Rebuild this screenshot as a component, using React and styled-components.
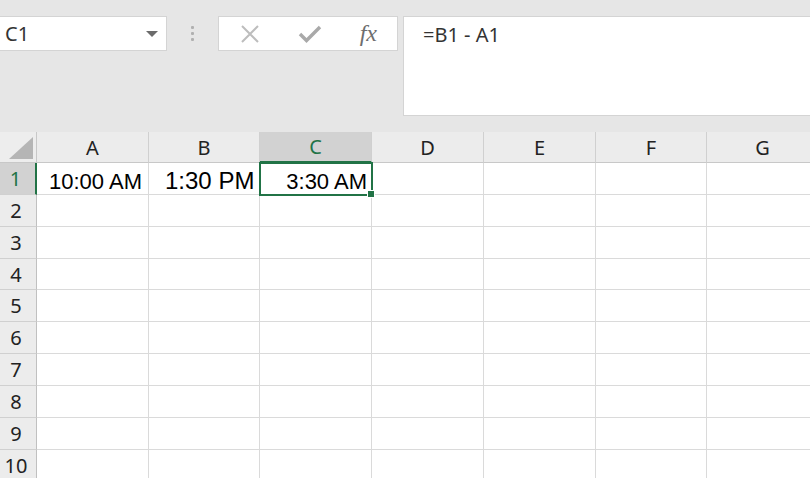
import styled, { createGlobalStyle } from "styled-components";

const GlobalStyle = createGlobalStyle`
  html, body {
    margin: 0;
    padding: 0;
    background: #ffffff;
    overflow: hidden;
  }
  * {
    box-sizing: border-box;
  }
`;

const Page = styled.div`
  width: 810px;
  height: 478px;
  display: flex;
  flex-direction: column;
  overflow: hidden;
  font-family: "Noto Sans", "Open Sans", sans-serif;
`;

const TopBar = styled.div`
  height: 132px;
  background: #e6e6e6;
  display: flex;
  align-items: flex-start;
  padding-top: 16px;
  flex-shrink: 0;
`;

const NameBox = styled.div`
  width: 167px;
  height: 35px;
  background: #ffffff;
  border: 1px solid #d4d4d4;
  border-left: none;
  display: flex;
  align-items: center;
  justify-content: space-between;
  padding: 0 8px 0 5px;
  font-size: 20px;
  color: #333333;
`;

const Caret = styled.span`
  width: 0;
  height: 0;
  border-left: 6px solid transparent;
  border-right: 6px solid transparent;
  border-top: 6px solid #6b6b6b;
`;

const Grip = styled.div`
  width: 51px;
  height: 35px;
  display: flex;
  flex-direction: column;
  align-items: center;
  justify-content: center;
  gap: 3px;
`;

const GripDot = styled.span`
  width: 3px;
  height: 3px;
  background: #b0b0b0;
  border-radius: 1px;
`;

const FnBox = styled.div`
  width: 180px;
  height: 35px;
  background: #ffffff;
  border: 1px solid #d4d4d4;
  display: flex;
  align-items: center;
  justify-content: space-between;
  padding: 0 20px 0 20px;
`;

const FxLabel = styled.span`
  font-family: "Liberation Serif", "DejaVu Serif", serif;
  font-style: italic;
  font-size: 24px;
  color: #6e6e6e;
  line-height: 1;
  margin-top: -2px;
`;

const FormulaBar = styled.div`
  flex: 1;
  margin-left: 5px;
  height: 100px;
  background: #ffffff;
  border: 1px solid #d4d4d4;
  border-right: none;
  padding: 4px 0 0 19px;
  font-size: 20px;
  color: #333333;
`;

const Sheet = styled.div`
  display: grid;
  grid-template-columns: 37px 112px 111px 112px 112px 112px 111px 112px;
  grid-template-rows: 31px 32px 32px 32px 31px 32px 32px 32px 32px 32px 32px;
  flex: 1;
`;

const Corner = styled.div`
  background: #ededed;
  border-right: 1px solid #c8c8c8;
  border-bottom: 1px solid #c8c8c8;
  display: flex;
  align-items: flex-end;
  justify-content: flex-end;
  padding: 0 3px 3px 0;
`;

const ColHead = styled.div`
  background: ${p => (p.$active ? "#d2d2d2" : "#ececec")};
  color: ${p => (p.$active ? "#217346" : "#222222")};
  border-right: 1px solid #d0d0d0;
  border-bottom: ${p => (p.$active ? "2px solid #217346" : "1px solid #c8c8c8")};
  display: flex;
  align-items: center;
  justify-content: center;
  font-size: 20px;
`;

const RowHead = styled.div`
  background: ${p => (p.$active ? "#d2d2d2" : "#ececec")};
  color: ${p => (p.$active ? "#217346" : "#222222")};
  border-right: ${p => (p.$active ? "2px solid #217346" : "1px solid #c0c0c0")};
  border-bottom: 1px solid #d0d0d0;
  display: flex;
  align-items: center;
  justify-content: center;
  padding-right: 4px;
  font-size: 20px;
`;

const Cell = styled.div`
  position: relative;
  background: #ffffff;
  border-right: 1px solid #dadada;
  border-bottom: 1px solid #dadada;
  display: flex;
  align-items: flex-end;
  justify-content: ${p => (p.$right ? "flex-end" : "flex-start")};
  padding: 0 4px 0 ${p => p.$indent ?? 12}px;
  font-family: "Liberation Sans", Arial, sans-serif;
  font-size: ${p => p.$size || 22}px;
  line-height: 1.1;
  color: #000000;
  white-space: nowrap;
  ${p =>
    p.$selected &&
    `
    outline: 2px solid #217346;
    outline-offset: -1px;
    z-index: 2;
    &::after {
      content: "";
      position: absolute;
      right: -4px;
      bottom: -4px;
      width: 6px;
      height: 6px;
      background: #217346;
      border: 1px solid #ffffff;
    }
  `}
`;

const columns = ["A", "B", "C", "D", "E", "F", "G"];
const rows = [1, 2, 3, 4, 5, 6, 7, 8, 9, 10, 11];

const data = {
  A1: { text: "10:00 AM", size: 22, indent: 12 },
  B1: { text: "1:30 PM", size: 24, indent: 16 },
  C1: { text: "3:30 AM", size: 22, right: true },
};

function CancelIcon() {
  return (
    <svg width="22" height="22" viewBox="0 0 22 22">
      <path d="M3 3 L19 19 M19 3 L3 19" stroke="#bdbdbd" strokeWidth="2" fill="none" />
    </svg>
  );
}

function EnterIcon() {
  return (
    <svg width="24" height="22" viewBox="0 0 24 22">
      <path d="M2 11 L8.5 17.5 L22 4" stroke="#a9a9a9" strokeWidth="3.4" fill="none" strokeLinejoin="miter" />
    </svg>
  );
}

export default function App() {
  return (
    <Page>
      <GlobalStyle />
      <TopBar>
        <NameBox>
          C1
          <Caret />
        </NameBox>
        <Grip>
          <GripDot />
          <GripDot />
          <GripDot />
        </Grip>
        <FnBox>
          <CancelIcon />
          <EnterIcon />
          <FxLabel>fx</FxLabel>
        </FnBox>
        <FormulaBar>=B1 - A1</FormulaBar>
      </TopBar>

      <Sheet>
        <Corner>
          <svg width="24" height="22" viewBox="0 0 24 22">
            <path d="M24 0 L24 22 L0 22 Z" fill="#b5b5b5" />
          </svg>
        </Corner>
        {columns.map(c => (
          <ColHead key={c} $active={c === "C"}>{c}</ColHead>
        ))}
        {rows.map(r => [
          <RowHead key={"h" + r} $active={r === 1}>{r}</RowHead>,
          ...columns.map(c => {
            const d = data[c + r];
            return (
              <Cell
                key={c + r}
                $selected={c === "C" && r === 1}
                $right={d && d.right}
                $size={d && d.size}
                $indent={d && d.indent}
              >
                {d ? d.text : ""}
              </Cell>
            );
          }),
        ])}
      </Sheet>
    </Page>
  );
}
